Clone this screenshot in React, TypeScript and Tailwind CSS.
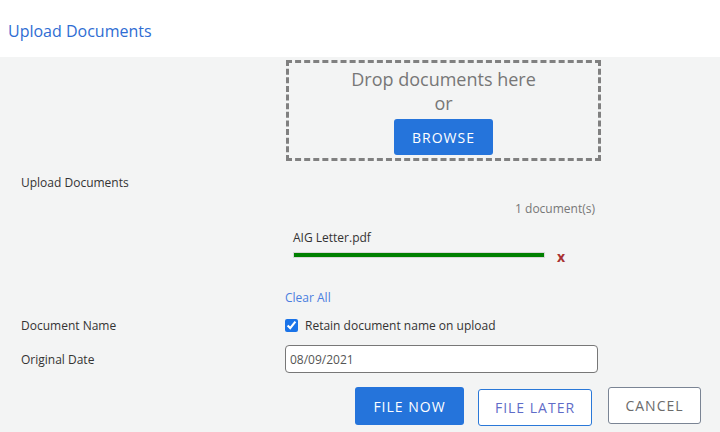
import React from "react";

const Row = ({ label, children, className = "" }: { label?: string; children?: React.ReactNode; className?: string }) => (
  <div className={`flex ${className}`}>
    <div className="w-[264px] shrink-0 text-[12px] leading-[17px] text-[#333]">{label}</div>
    <div className="flex-1">{children}</div>
  </div>
);

export default function App() {
  return (
    <div className="w-[720px] h-[432px] overflow-hidden bg-[#f3f4f4] font-['Open_Sans',sans-serif]">
      <header className="h-[57px] bg-white flex items-center pt-[4px] px-[8px]">
        <h1 className="text-[16px] leading-[22px] text-[#2f6dd3]">Upload Documents</h1>
      </header>

      <div className="pl-[21px]">
        <Row className="pt-[3px]">
          <div className="ml-[1px] w-[315px] h-[101px] border-[3px] border-dashed border-[#808080] flex flex-col items-center">
            <p className="mt-[4px] text-[18px] leading-[24px] text-[#777]">Drop documents here</p>
            <p className="text-[18px] leading-[24px] text-[#777]">or</p>
            <button className="mt-[4px] w-[99px] h-[36px] rounded-[3px] bg-[#2574db] text-white text-[14px] tracking-[1px]">
              BROWSE
            </button>
          </div>
        </Row>

        <Row label="Upload Documents" className="mt-[13px] items-start">
          <div className="w-[310px] pt-[26px]">
            <p className="text-right text-[12px] leading-[17px] text-[#777]">1 document(s)</p>
            <p className="mt-[12px] pl-[8px] text-[12px] leading-[17px] text-[#333]">AIG Letter.pdf</p>
            <div className="mt-[6px] pl-[8px] flex items-center h-[6px]">
              <div className="w-[252px] h-[6px] border border-[#d8d8d8] bg-[#008000]" />
              <span className="ml-[12px] mt-[3px] text-[14px] leading-[6px] font-bold text-[#a83232]">x</span>
            </div>
            <a className="block mt-[31px] text-[12px] leading-[17px] text-[#4a7ee0]">Clear All</a>
          </div>
        </Row>

        <Row label="Document Name" className="mt-[11px] items-center">
          <label className="flex items-center gap-[7px] text-[12px] leading-[17px] text-[#333]">
            <input type="checkbox" defaultChecked className="m-0 w-[13px] h-[13px] accent-[#1a73e8]" />
            Retain document name on upload
          </label>
        </Row>

        <Row label="Original Date" className="mt-[11px] items-center">
          <input
            defaultValue="08/09/2021"
            className="w-[313px] h-[28px] rounded-[4px] border border-[#777] bg-white px-[4px] text-[12px] text-[#555] outline-none"
          />
        </Row>

        <div className="mt-[14px] pr-[19px] flex justify-end items-start">
          <button className="w-[109px] h-[38px] rounded-[3px] bg-[#2574db] text-white text-[14px] tracking-[1px]">
            FILE NOW
          </button>
          <button className="ml-[14px] mt-[2px] w-[114px] h-[37px] rounded-[3px] border border-[#2a78d8] bg-white text-[#5f6cc8] text-[14px] tracking-[1px]">
            FILE LATER
          </button>
          <button className="ml-[16px] w-[93px] h-[37px] rounded-[3px] border border-[#7a8494] bg-white text-[#6b6b6b] text-[14px] tracking-[1px]">
            CANCEL
          </button>
        </div>
      </div>
    </div>
  );
}
